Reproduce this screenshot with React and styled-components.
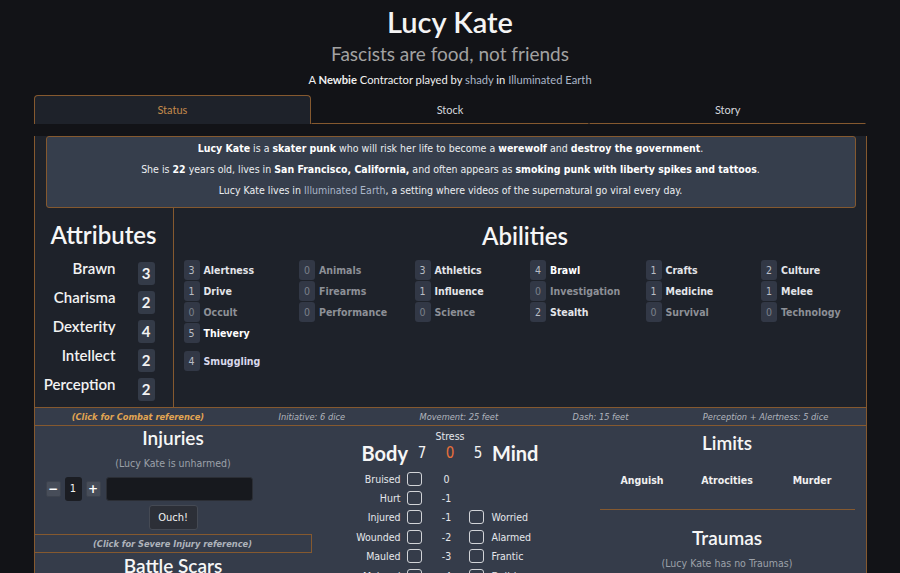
import styled, { createGlobalStyle } from "styled-components";

const ORANGE = "#85592f";

const GlobalStyle = createGlobalStyle`
  html, body {
    margin: 0;
    background: #121317;
  }
  body {
    font-family: "DejaVu Sans Condensed", "DejaVu Sans", sans-serif;
    color: #e6e8ec;
    overflow: hidden;
  }
  * { box-sizing: border-box; }
`;

const Page = styled.div`
  width: 833px;
  margin: 0 auto;
  padding-top: 5px;
`;

const Title = styled.h1`
  margin: 0;
  font-family: Lato, sans-serif;
  font-size: 29px;
  line-height: 34px;
  font-weight: 600;
  text-align: center;
  color: #f4f4f4;
`;

const Subtitle = styled.h2`
  margin: 3px 0 0;
  font-family: Lato, sans-serif;
  font-size: 19px;
  line-height: 24px;
  font-weight: 400;
  text-align: center;
  color: #a2a2a2;
`;

const Byline = styled.div`
  margin-top: 6px;
  font-family: Lato, sans-serif;
  font-size: 11.2px;
  line-height: 16px;
  text-align: center;
  color: #f0f0f0;
  b { font-weight: 700; }
`;

const Link = styled.span`
  color: #aab6c8;
`;

const Tabs = styled.div`
  margin-top: 7px;
  display: grid;
  grid-template-columns: repeat(3, 1fr);
  height: 28px;
`;

const Tab = styled.div`
  font-family: Lato, sans-serif;
  font-size: 11px;
  line-height: 27px;
  text-align: center;
  color: ${(p) => (p.$active ? "#c48a4c" : "#d4d7dc")};
  background: ${(p) => (p.$active ? "#1e222a" : "transparent")};
  border: 1px solid ${(p) => (p.$active ? ORANGE : "transparent")};
  border-bottom: ${(p) => (p.$active ? "none" : `1px solid ${ORANGE}`)};
  border-radius: ${(p) => (p.$active ? "4px 4px 0 0" : "0")};
`;

const Panel = styled.div`
  background: #1e222a;
  border: 1px solid ${ORANGE};
  border-top: none;
`;

const Description = styled.div`
  margin: 13px 10px 0 11px;
  padding: 1px 8px 6px;
  background: #363e4c;
  border: 1px solid ${ORANGE};
  border-radius: 3px;
  font-size: 10.5px;
  line-height: 21px;
  text-align: center;
  color: #eceef1;
  p { margin: 0; }
  b { font-weight: 700; color: #ffffff; }
`;

const MainGrid = styled.div`
  display: grid;
  grid-template-columns: 139px 1fr;
`;

const AttributesCol = styled.div`
  border-right: 1px solid ${ORANGE};
  padding-bottom: 6px;
`;

const SectionHeading = styled.h3`
  margin: ${(p) => p.$margin || "0"};
  font-family: Lato, sans-serif;
  font-size: ${(p) => p.$size || "24px"};
  line-height: ${(p) => p.$lh || "28px"};
  font-weight: 600;
  text-align: center;
  color: #f6f6f6;
`;

const AttrList = styled.div`
  margin-top: 13px;
  display: grid;
  grid-template-columns: 81px 17px;
  column-gap: 22px;
  row-gap: 6px;
  align-items: start;
`;

const AttrLabel = styled.div`
  font-family: Lato, sans-serif;
  font-size: 15px;
  line-height: 13px;
  font-weight: 600;
  text-align: right;
  color: #f2f2f2;
`;

const AttrValue = styled.div`
  width: 17px;
  height: 23px;
  border-radius: 3px;
  background: #343b48;
  font-family: Lato, sans-serif;
  font-size: 15px;
  font-weight: 700;
  line-height: 23px;
  text-align: center;
  color: #f2f2f2;
`;

const AbilitiesCol = styled.div``;

const AbilityGrid = styled.div`
  margin-top: ${(p) => p.$top || "0"};
  padding-left: 10px;
  display: grid;
  grid-template-columns: repeat(6, 115.5px);
  row-gap: 1px;
`;

const Ability = styled.div`
  display: flex;
  align-items: center;
  height: 20px;
`;

const AbilityValue = styled.span`
  width: 16px;
  height: 20px;
  border-radius: 3px;
  background: #323846;
  font-size: 10.5px;
  line-height: 20px;
  text-align: center;
  color: ${(p) => (p.$zero ? "#7b808a" : "#b9bdc5")};
`;

const AbilityName = styled.span`
  margin-left: 4px;
  font-size: 10.5px;
  font-weight: 700;
  color: ${(p) => p.$color};
`;

const ReferenceBar = styled.div`
  display: flex;
  justify-content: space-around;
  background: #353c4a;
  border-top: 1px solid ${ORANGE};
  border-bottom: 1px solid ${ORANGE};
  font-size: 9.2px;
  line-height: 17px;
  font-style: italic;
  color: #b1b5bd;
`;

const RefLink = styled.span`
  font-weight: 700;
  color: ${(p) => p.$color || "#e2a552"};
`;

const Lower = styled.div`
  display: grid;
  grid-template-columns: repeat(3, 1fr);
  background: #353c4a;
  height: 160px;
  overflow: hidden;
`;

const Column = styled.div`
  display: flex;
  flex-direction: column;
  align-items: stretch;
`;

const Note = styled.div`
  margin-top: ${(p) => p.$top || "6px"};
  font-size: 10.5px;
  line-height: 16px;
  text-align: center;
  color: #9ca1a9;
`;

const InjuryControls = styled.div`
  margin-top: 6px;
  padding-left: 11px;
  display: flex;
  align-items: center;
  gap: 4px;
`;

const StepButton = styled.button`
  width: 15px;
  height: 16px;
  padding: 0;
  border: 1px solid #3c424d;
  border-radius: 2px;
  background: #474d59;
  color: #ffffff;
  font-family: "DejaVu Sans", sans-serif;
  font-size: 12px;
  font-weight: 700;
  line-height: 13px;
`;

const CountBox = styled.div`
  width: 17px;
  height: 24px;
  border-radius: 3px;
  background: #1b1d23;
  font-size: 11px;
  line-height: 24px;
  text-align: center;
  color: #f2f2f2;
`;

const InjuryInput = styled.div`
  width: 147px;
  height: 24px;
  margin-left: 1px;
  border: 1px solid #2b2e35;
  border-radius: 3px;
  background: #17191e;
`;

const OuchButton = styled.button`
  align-self: center;
  margin-top: 4px;
  width: 49px;
  height: 25px;
  padding: 0;
  border: 1px solid #454a54;
  border-radius: 3px;
  background: #2c2f37;
  color: #f2f2f2;
  font-family: "DejaVu Sans Condensed", "DejaVu Sans", sans-serif;
  font-size: 11px;
`;

const SevereBar = styled.div`
  margin: 4px 0 0 -1px;
  border: 1px solid ${ORANGE};
  font-size: 9.2px;
  line-height: 17px;
  font-style: italic;
  font-weight: 700;
  text-align: center;
  color: #aeb3bb;
`;

const StressLabel = styled.div`
  margin-top: 3px;
  font-size: 10.5px;
  line-height: 14px;
  text-align: center;
  color: #e6e8ec;
`;

const StressHeader = styled.div`
  display: grid;
  grid-template-columns: 1fr 28px 28px 28px 1fr;
  align-items: center;
  height: 24px;
  margin-top: -2px;
`;

const Side = styled.span`
  font-family: Lato, sans-serif;
  font-size: 20px;
  font-weight: 700;
  text-align: ${(p) => p.$align};
  color: #f6f6f6;
`;

const StressNum = styled.span`
  font-size: 15px;
  text-align: center;
  color: ${(p) => p.$color || "#f2f2f2"};
`;

const StressGrid = styled.div`
  margin-top: 4px;
  padding-right: 10px;
  display: grid;
  grid-template-columns: 1fr 15px 47px 15px 1fr;
  grid-auto-rows: 19.4px;
  align-items: center;
  font-size: 10.5px;
  color: #e6e8ec;
`;

const StressName = styled.span`
  text-align: ${(p) => p.$align};
  padding: ${(p) => (p.$align === "right" ? "0 6px 0 0" : "0 0 0 8px")};
  white-space: nowrap;
`;

const Check = styled.span`
  display: block;
  width: 15px;
  height: 14px;
  border: 1.5px solid #d2d4d8;
  border-radius: 3px;
`;

const Penalty = styled.span`
  text-align: center;
  padding-left: 3px;
`;

const LimitsRow = styled.div`
  margin-top: 18px;
  padding: 0 11px;
  display: grid;
  grid-template-columns: repeat(3, 1fr);
  font-size: 10.5px;
  line-height: 16px;
  font-weight: 700;
  text-align: center;
  color: #f0f0f0;
`;

const Rule = styled.hr`
  margin: 21px 11px 0;
  border: none;
  border-top: 1px solid ${ORANGE};
`;

const attributes = [
  ["Brawn", 3],
  ["Charisma", 2],
  ["Dexterity", 4],
  ["Intellect", 2],
  ["Perception", 2],
];

const abilities = [
  ["Alertness", 3], ["Animals", 0], ["Athletics", 3], ["Brawl", 4], ["Crafts", 1], ["Culture", 2],
  ["Drive", 1], ["Firearms", 0], ["Influence", 1], ["Investigation", 0], ["Medicine", 1], ["Melee", 1],
  ["Occult", 0], ["Performance", 0], ["Science", 0], ["Stealth", 2], ["Survival", 0], ["Technology", 0],
  ["Thievery", 5],
];

const stressRows = [
  ["Bruised", "0", null],
  ["Hurt", "-1", null],
  ["Injured", "-1", "Worried"],
  ["Wounded", "-2", "Alarmed"],
  ["Mauled", "-3", "Frantic"],
  ["Maimed", "-4", "Delirious"],
  ["Crippled", "-5", "Broken"],
];

const nameColor = (v) => {
  if (v === 0) return "#8d9097";
  if (v >= 4) return "#ffffff";
  return "#e3e5e9";
};

export default function App() {
  return (
    <>
      <GlobalStyle />
      <Page>
        <Title>Lucy Kate</Title>
        <Subtitle>Fascists are food, not friends</Subtitle>
        <Byline>
          A <b>Newbie</b> Contractor played by <Link>shady</Link> in <Link>Illuminated Earth</Link>
        </Byline>

        <Tabs>
          <Tab $active>Status</Tab>
          <Tab>Stock</Tab>
          <Tab>Story</Tab>
        </Tabs>

        <Panel>
          <Description>
            <p>
              <b>Lucy Kate</b> is a <b>skater punk</b> who will risk her life to become a <b>werewolf</b> and{" "}
              <b>destroy the government</b>.
            </p>
            <p>
              She is <b>22</b> years old, lives in <b>San Francisco, California,</b> and often appears as{" "}
              <b>smoking punk with liberty spikes and tattoos</b>.
            </p>
            <p>
              Lucy Kate lives in <Link>Illuminated Earth</Link>, a setting where videos of the supernatural go viral every day.
            </p>
          </Description>

          <MainGrid>
            <AttributesCol>
              <SectionHeading $margin="13px 0 0">Attributes</SectionHeading>
              <AttrList>
                {attributes.map(([name, value]) => (
                  <>
                    <AttrLabel key={name}>{name}</AttrLabel>
                    <AttrValue key={name + "v"}>{value}</AttrValue>
                  </>
                ))}
              </AttrList>
            </AttributesCol>

            <AbilitiesCol>
              <SectionHeading $margin="14px 0 0">Abilities</SectionHeading>
              <AbilityGrid $top="10px">
                {abilities.map(([name, value]) => (
                  <Ability key={name}>
                    <AbilityValue $zero={value === 0}>{value}</AbilityValue>
                    <AbilityName $color={nameColor(value)}>{name}</AbilityName>
                  </Ability>
                ))}
              </AbilityGrid>
              <AbilityGrid $top="8px">
                <Ability>
                  <AbilityValue>4</AbilityValue>
                  <AbilityName $color="#d9d9ec">Smuggling</AbilityName>
                </Ability>
              </AbilityGrid>
            </AbilitiesCol>
          </MainGrid>

          <ReferenceBar>
            <RefLink>(Click for Combat reference)</RefLink>
            <span>Initiative: 6 dice</span>
            <span>Movement: 25 feet</span>
            <span>Dash: 15 feet</span>
            <span>Perception + Alertness: 5 dice</span>
          </ReferenceBar>

          <Lower>
            <Column>
              <SectionHeading $size="19px" $lh="22px" $margin="1px 0 0">Injuries</SectionHeading>
              <Note>(Lucy Kate is unharmed)</Note>
              <InjuryControls>
                <StepButton>−</StepButton>
                <CountBox>1</CountBox>
                <StepButton>+</StepButton>
                <InjuryInput />
              </InjuryControls>
              <OuchButton>Ouch!</OuchButton>
              <SevereBar>(Click for Severe Injury reference)</SevereBar>
              <SectionHeading $size="19px" $lh="22px" $margin="2px 0 0">Battle Scars</SectionHeading>
            </Column>

            <Column>
              <StressLabel>Stress</StressLabel>
              <StressHeader>
                <Side $align="right">Body</Side>
                <StressNum>7</StressNum>
                <StressNum $color="#e8703a">0</StressNum>
                <StressNum>5</StressNum>
                <Side $align="left">Mind</Side>
              </StressHeader>
              <StressGrid>
                {stressRows.map(([body, penalty, mind]) => (
                  <>
                    <StressName key={body} $align="right">{body}</StressName>
                    <Check key={body + "c"} />
                    <Penalty key={body + "p"}>{penalty}</Penalty>
                    {mind ? <Check key={body + "m"} /> : <span key={body + "m"} />}
                    <StressName key={body + "n"} $align="left">{mind}</StressName>
                  </>
                ))}
              </StressGrid>
            </Column>

            <Column>
              <SectionHeading $size="19px" $lh="22px" $margin="6px 0 0">Limits</SectionHeading>
              <LimitsRow>
                <span>Anguish</span>
                <span>Atrocities</span>
                <span>Murder</span>
              </LimitsRow>
              <Rule />
              <SectionHeading $size="19px" $lh="22px" $margin="17px 0 0">Traumas</SectionHeading>
              <Note>(Lucy Kate has no Traumas)</Note>
            </Column>
          </Lower>
        </Panel>
      </Page>
    </>
  );
}
